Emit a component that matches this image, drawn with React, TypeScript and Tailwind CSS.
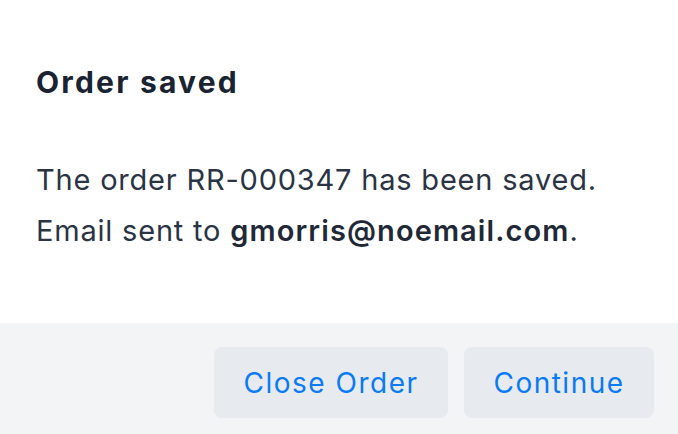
export default function App() {
  return (
    <div className="w-[678px] h-[434px] bg-white overflow-hidden flex flex-col" style={{ fontFamily: "Inter, 'Noto Sans', sans-serif" }}>
      <div className="pl-[36px] pt-[60px] h-[323px]">
        <h1 className="text-[30px] leading-[44px] font-bold tracking-[2.2px] text-[#1a2332]">Order saved</h1>
        <div className="mt-[50px] text-[29px] leading-[51px] tracking-[0.8px] text-[#2a3444]">
          <p>The order RR-000347 has been saved.</p>
          <p>
            Email sent to <span className="font-semibold tracking-[1.1px] text-[#1f2937]">gmorris@noemail.com</span>.
          </p>
        </div>
      </div>
      <div className="flex-1 bg-[#f3f4f6] flex justify-end items-start gap-4 pt-[24px] pr-[24px]">
        <button className="h-[71px] w-[234px] rounded-lg bg-[#e7eaee] text-[#0a7af5] text-[28px] tracking-[1.5px]">Close Order</button>
        <button className="h-[71px] w-[190px] rounded-lg bg-[#e7eaee] text-[#0a7af5] text-[28px] tracking-[1.5px]">Continue</button>
      </div>
    </div>
  );
}
